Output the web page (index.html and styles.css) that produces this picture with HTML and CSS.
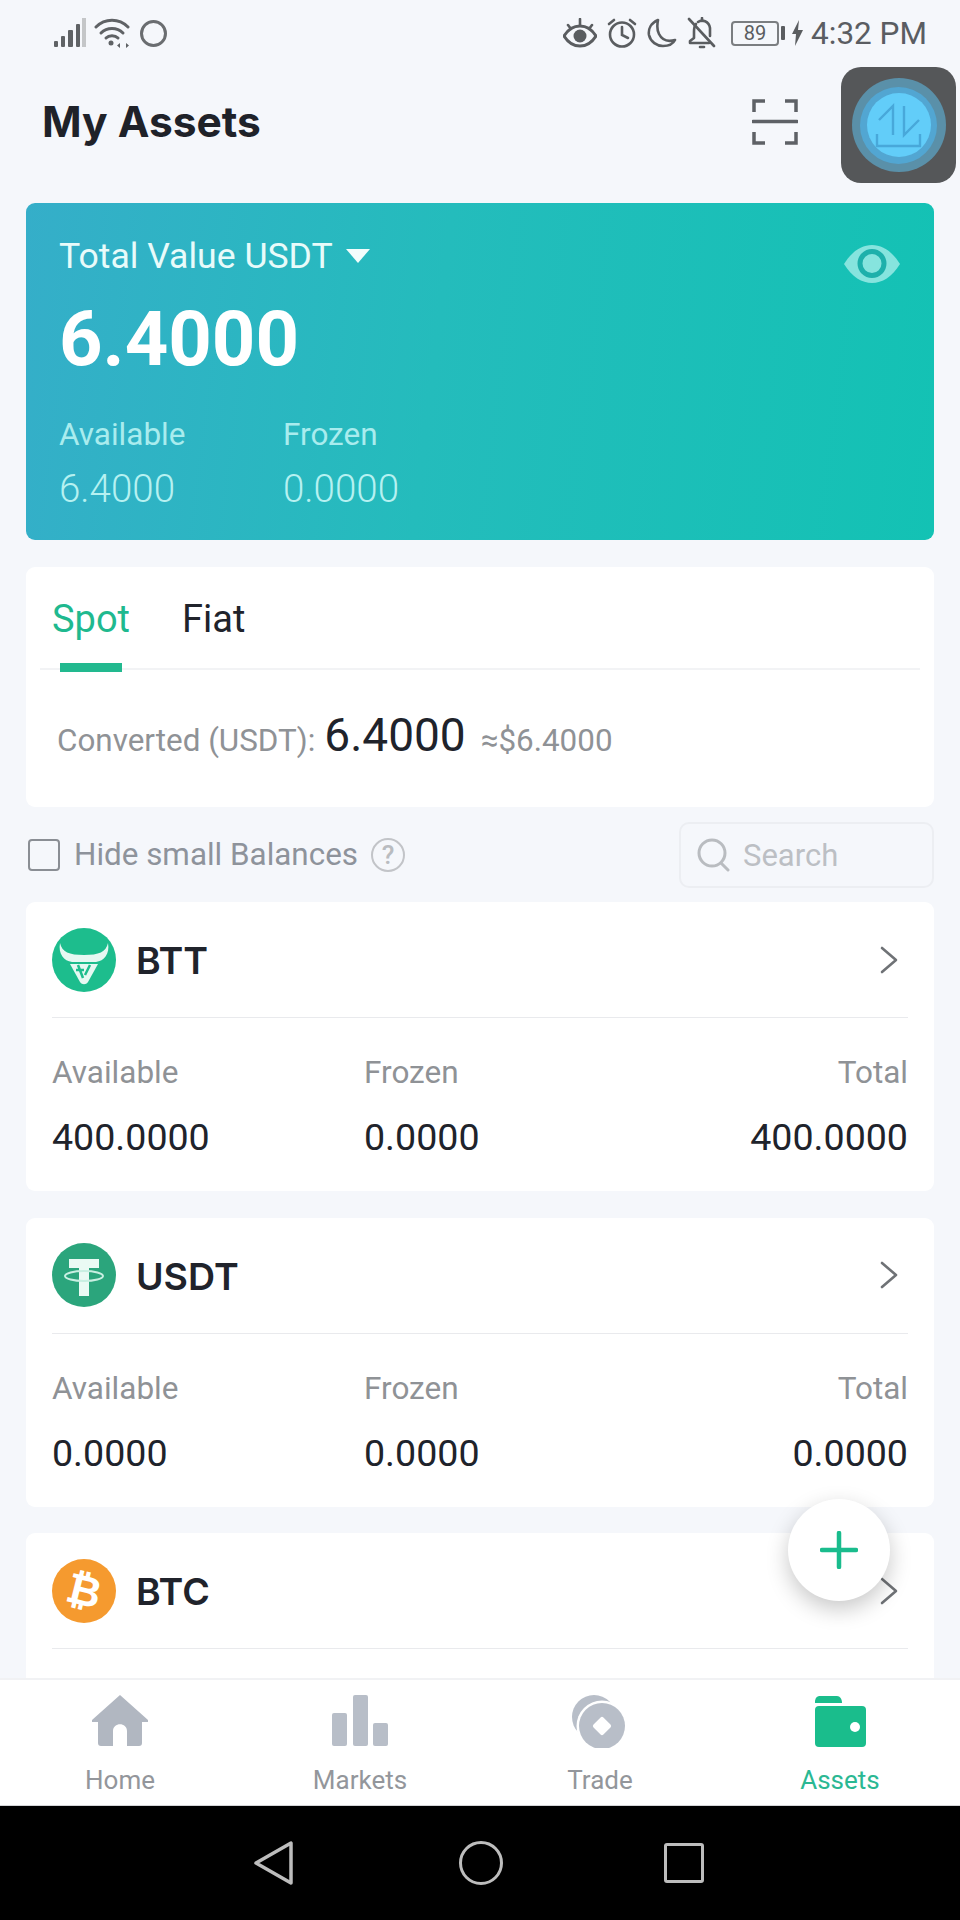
FILE: index.html
```html
<!DOCTYPE html>
<html>
<head>
<meta charset="utf-8">
<title>My Assets</title>
<link rel="stylesheet" href="styles.css">
</head>
<body>
<div class="phone">
  <div class="status">
    <div class="status-left">
      <svg width="34" height="30" viewBox="0 0 34 30"><rect x="1" y="23" width="4" height="6" rx="1" fill="#5f6265"/><rect x="8" y="18" width="4" height="11" rx="1" fill="#5f6265"/><rect x="15" y="12" width="5" height="17" rx="1" fill="#5f6265"/><rect x="23" y="6" width="4" height="23" rx="1" fill="#5f6265"/><rect x="29" y="0" width="4" height="29" fill="#c4c6c8"/></svg>
      <svg width="36" height="32" viewBox="0 0 36 32" fill="none" stroke="#5f6265" stroke-width="3" stroke-linecap="round"><path d="M2 10C11 1 25 1 34 10"/><path d="M7 16C13 10 23 10 29 16"/><path d="M12 21C15 18 21 18 24 21"/><circle cx="17" cy="26" r="2.5" fill="#5f6265" stroke="none"/><path d="M26 26l-3 2.5 3 2.5zM30 25v6M32 26l3 2.5-3 2.5z" fill="#5f6265" stroke="none"/></svg>
      <span class="dot-ring"></span>
    </div>
    <div class="status-right">
      <svg class="st-eye" width="34" height="30" viewBox="0 0 34 30"><path d="M1 18C6 10 12 8 17 8s11 2 16 10c-5 8-11 10-16 10S6 26 1 18z" fill="none" stroke="#5a5d60" stroke-width="3"/><circle cx="17" cy="18" r="6.5" fill="#5a5d60"/><path d="M5 7l3 4M17 1v6M29 7l-3 4" stroke="#5a5d60" stroke-width="2.6" stroke-linecap="round"/></svg>
      <svg class="st-alarm" width="30" height="30" viewBox="0 0 30 30" fill="none" stroke="#5a5d60" stroke-width="2.6" stroke-linecap="round"><circle cx="15" cy="16.5" r="12"/><path d="M15 9v8l6 3M2 6l5-4M28 6l-5-4"/></svg>
      <svg class="st-moon" width="30" height="30" viewBox="0 0 30 30"><path d="M11 2C4 5 1 11 2 17c1.5 7 8 11 14 11 5 0 10-2 12-6-7 2-13 0-16-6-2-4-2-9-1-14z" fill="none" stroke="#5a5d60" stroke-width="2.6" stroke-linejoin="round"/></svg>
      <svg class="st-bell" width="30" height="32" viewBox="0 0 30 32" fill="none" stroke="#5a5d60" stroke-width="2.6" stroke-linecap="round" stroke-linejoin="round"><path d="M9 7C7 9 7 12 7 15v6l-4 3v2h19"/><path d="M11 5c4-3 11-1 12 6v8"/><path d="M15 1v3M2 2l25 27"/><path d="M13 30h4"/></svg>
      <div class="battery"><span class="battery-num">89</span></div>
      <span class="battery-nub"></span>
      <svg class="st-bolt" width="11" height="26" viewBox="0 0 11 26"><path d="M7 0L0 14h4l-1 12 8-16H6z" fill="#5a5d60"/></svg>
      <span class="clock">4:32 PM</span>
    </div>
  </div>

  <div class="header">
    <h1 class="title">My Assets</h1>
    <svg class="scan" width="46" height="46" viewBox="0 0 46 46" fill="none" stroke="#5e6166" stroke-width="3.5"><path d="M13 2H2v11M33 2h11v11M2 33v11h11M44 33v11H33"/><path d="M1 22.5h44" stroke-linecap="round"/></svg>
  </div>

  <div class="content">
    <div class="hero">
      <div class="hero-top">
        <span class="hero-title">Total Value USDT</span>
        <span class="caret"></span>
        <svg class="hero-eye" width="56" height="38" viewBox="0 0 56 38"><path d="M0 19C8 6 18 0 28 0s20 6 28 19c-8 13-18 19-28 19S8 32 0 19z" fill="#86e4de"/><circle cx="28" cy="18.5" r="12" fill="none" stroke="#1eb0ab" stroke-width="5"/></svg>
      </div>
      <div class="hero-amount">6.4000</div>
      <div class="hero-cols">
        <div class="hero-col">
          <span class="hero-label">Available</span>
          <span class="hero-value">6.4000</span>
        </div>
        <div class="hero-col">
          <span class="hero-label">Frozen</span>
          <span class="hero-value">0.0000</span>
        </div>
      </div>
    </div>

    <div class="panel">
      <div class="tabs">
        <span class="tab tab-on">Spot</span>
        <span class="tab">Fiat</span>
      </div>
      <div class="converted">
        <span class="conv-label">Converted (USDT):</span>
        <span class="conv-value">6.4000</span>
        <span class="conv-usd">≈$6.4000</span>
      </div>
    </div>

    <div class="filter">
      <span class="checkbox"></span>
      <span class="filter-text">Hide small Balances</span>
      <span class="help">?</span>
      <div class="search">
        <svg width="34" height="34" viewBox="0 0 34 34" fill="none" stroke="#b9bcc0" stroke-width="3" stroke-linecap="round"><circle cx="15" cy="15" r="13"/><path d="M24 25l7 7"/></svg>
        <span class="search-text">Search</span>
      </div>
    </div>

    <div class="coin">
      <div class="coin-head">
        <svg width="64" height="64" viewBox="0 0 64 64"><circle cx="32" cy="32" r="32" fill="#1dbd8d"/><path d="M8 15c2 9 9 12 24 12s22-3 24-12c2 11-4 18-12 19H20C12 33 6 26 8 15z" fill="#e6f8f2"/><path d="M18 36h28L36 54c-2 3-6 3-8 0z" fill="#e6f8f2"/><path d="M26 37l5 13M38 37l-5 10M24 42h8" fill="none" stroke="#1dbd8d" stroke-width="2.5"/></svg>
        <span class="coin-name">BTT</span>
        <svg class="chevron" width="18" height="28" viewBox="0 0 18 28" fill="none" stroke="#6f7276" stroke-width="2.6" stroke-linecap="round" stroke-linejoin="round"><path d="M2 2l14 12L2 26"/></svg>
      </div>
      <div class="coin-cols">
        <span class="coin-label">Available</span><span class="coin-label">Frozen</span><span class="coin-label coin-end">Total</span>
        <span class="coin-value">400.0000</span><span class="coin-value">0.0000</span><span class="coin-value coin-end">400.0000</span>
      </div>
    </div>

    <div class="coin">
      <div class="coin-head">
        <svg width="64" height="64" viewBox="0 0 64 64"><circle cx="32" cy="32" r="32" fill="#2ba57c"/><path d="M17 16h30v9H37v28h-10V25H17z" fill="#eafaf4"/><ellipse cx="32" cy="33" rx="19" ry="5" fill="none" stroke="#c9efe2" stroke-width="2"/></svg>
        <span class="coin-name">USDT</span>
        <svg class="chevron" width="18" height="28" viewBox="0 0 18 28" fill="none" stroke="#6f7276" stroke-width="2.6" stroke-linecap="round" stroke-linejoin="round"><path d="M2 2l14 12L2 26"/></svg>
      </div>
      <div class="coin-cols">
        <span class="coin-label">Available</span><span class="coin-label">Frozen</span><span class="coin-label coin-end">Total</span>
        <span class="coin-value">0.0000</span><span class="coin-value">0.0000</span><span class="coin-value coin-end">0.0000</span>
      </div>
    </div>

    <div class="coin">
      <div class="coin-head">
        <div class="btc-logo"><span class="btc-mark">₿</span></div>
        <span class="coin-name">BTC</span>
        <svg class="chevron" width="18" height="28" viewBox="0 0 18 28" fill="none" stroke="#6f7276" stroke-width="2.6" stroke-linecap="round" stroke-linejoin="round"><path d="M2 2l14 12L2 26"/></svg>
      </div>
    </div>
  </div>

  <div class="nav">
    <div class="nav-item">
      <svg width="58" height="54" viewBox="0 0 58 54"><path d="M29 1L1 26v2h6v21c0 2 1 3 3 3h12V37c0-9 14-9 14 0v15h12c2 0 3-1 3-3V28h6v-2z" fill="#b1b7c1"/></svg>
      <span class="nav-text">Home</span>
    </div>
    <div class="nav-item">
      <svg width="58" height="54" viewBox="0 0 58 54"><rect x="1" y="19" width="15" height="33" rx="2" fill="#b8bec8"/><rect x="22" y="1" width="15" height="51" rx="2" fill="#b8bec8"/><rect x="42" y="29" width="15" height="23" rx="2" fill="#b8bec8"/></svg>
      <span class="nav-text">Markets</span>
    </div>
    <div class="nav-item">
      <svg width="58" height="54" viewBox="0 0 58 54"><circle cx="23" cy="23" r="22" fill="#b8bec8"/><circle cx="31" cy="32" r="25.5" fill="#fff"/><circle cx="31" cy="32" r="23" fill="#b8bec8"/><rect x="24" y="25" width="14" height="14" rx="2" fill="#fff" transform="rotate(45 31 32)"/></svg>
      <span class="nav-text">Trade</span>
    </div>
    <div class="nav-item nav-on">
      <svg width="58" height="54" viewBox="0 0 58 54"><path d="M4 8c0-4 2-6 5-6h17c3 0 5 3 5 7H4z" fill="#1abd8c"/><rect x="4" y="12" width="51" height="41" rx="4" fill="#1abd8c"/><circle cx="44" cy="33" r="5" fill="#fff"/></svg>
      <span class="nav-text">Assets</span>
    </div>
  </div>

  <div class="softkeys">
    <svg width="40" height="46" viewBox="0 0 40 46" fill="none" stroke="#bdbdbd" stroke-width="3.5" stroke-linejoin="round"><path d="M37 3v40L2 23z"/></svg>
    <span class="key-circle"></span>
    <span class="key-square"></span>
  </div>

  <div class="fab">
    <svg width="38" height="38" viewBox="0 0 38 38" stroke="#1abc8d" stroke-width="4.5" stroke-linecap="round"><path d="M19 2v34M2 19h34"/></svg>
  </div>

  <div class="float-btn">
    <div class="float-outer">
      <div class="float-mid">
        <div class="float-inner">
          <svg width="47" height="45" viewBox="0 0 47 45" fill="none" stroke="#48a8da" stroke-width="2.4"><path d="M4 17L18 3v29M29 3v29l15-15"/><path d="M2 31v12h43V31"/></svg>
        </div>
      </div>
    </div>
  </div>
</div>
</body>
</html>
```

FILE: styles.css
```css
html,body{ margin:0; padding:0;}
body{ background:#f5f7fb; font-family:Roboto,"Liberation Sans",sans-serif;}
.phone{ position:relative; display:flex; flex-direction:column; width:960px; height:1920px; overflow:hidden; background:#f5f7fb;}

/* status bar */
.status{ display:flex; justify-content:space-between; align-items:center; flex:none; height:66px; padding:0 33px 0 53px;}
.status-left{ display:flex; align-items:center; gap:7px;}
.dot-ring{ width:21px; height:21px; margin-left:3px; border:3px solid #6a6d70; border-radius:50%;}
.status-right{ display:flex; align-items:center;}
.st-alarm{ margin-left:10px;}
.st-moon{ margin-left:10px;}
.st-bell{ margin-left:10px;}
.battery{ display:flex; justify-content:center; align-items:center; box-sizing:border-box; width:48px; height:25px; margin-left:14px; border:2px solid #7b7e81; border-radius:4px;}
.battery-num{ font-size:20px; line-height:20px; color:#5a5d60;}
.battery-nub{ width:4px; height:14px; margin-left:2px; background:#5a5d60; border-radius:1px;}
.st-bolt{ margin-left:7px;}
.clock{ margin-left:8px; font-size:31.5px; color:#5a5d62;}

/* header */
.header{ display:flex; justify-content:space-between; align-items:center; flex:none; height:137px; padding:0 162px 26px 42px; box-sizing:border-box;}
.title{ margin:0; font-family:Inter,"Liberation Sans",sans-serif; font-size:42.5px; font-weight:700; color:#1f2229;}

/* content */
.content{ flex:1; overflow:hidden; padding:0 26px; min-height:0;}
.hero{ box-sizing:border-box; height:337px; padding:32px 34px 0 33px; border-radius:9px; background:linear-gradient(97deg,#35aec9 0%,#24bcbc 45%,#13c2b4 100%); color:#e8fbfa;}
.hero-top{ display:flex; align-items:center; height:42px;}
.hero-title{ font-size:35.6px; line-height:42px;}
.caret{ width:0; height:0; margin-left:13px; border-left:12px solid transparent; border-right:12px solid transparent; border-top:14px solid #f2fdfc;}
.hero-eye{ margin:16px 0 0 auto;}
.hero-amount{ margin-top:18px; font-size:76px; line-height:88px; font-weight:700; color:#fff;}
.hero-cols{ display:flex; margin-top:34px;}
.hero-col{ display:flex; flex-direction:column; width:224px;}
.hero-label{ font-size:31.5px; line-height:36px; color:#a9ecee;}
.hero-value{ margin-top:14px; font-size:38.5px; line-height:44px; font-weight:300; color:#b6f1f1;}

.panel{ box-sizing:border-box; height:240px; margin-top:27px; padding:0 14px; border-radius:9px; background:#fff;}
.tabs{ display:flex; gap:52px; height:103px; padding:0 18px 0 12px; box-sizing:border-box; border-bottom:2px solid #f2f3f5; margin:0;}
.tab{ position:relative; box-sizing:border-box; height:103px; padding-top:29px; font-size:38px; line-height:46px; color:#20232b;}
.tab-on{ color:#1fb98f;}
.tab-on:after{ content:""; position:absolute; left:8px; right:8px; bottom:-2px; height:9px; background:#22b98f;}
.converted{ display:flex; align-items:baseline; padding:38px 0 0 17px;}
.conv-label{ font-size:31.4px; color:#8f9296;}
.conv-value{ margin-left:9px; font-size:46px; color:#20232b;}
.conv-usd{ margin-left:15px; font-size:31.4px; color:#8f9296;}

.filter{ display:flex; align-items:center; height:95px; margin-left:2px;}
.checkbox{ box-sizing:border-box; width:32px; height:32px; border:2px solid #8a8e94; border-radius:4px;}
.filter-text{ margin-left:14px; font-size:31.4px; color:#8e939b;}
.help{ display:flex; justify-content:center; align-items:center; box-sizing:border-box; width:34px; height:34px; margin-left:13px; border:2.5px solid #c2c4c8; border-radius:50%; font-size:26px; font-weight:500; color:#b9bcc0;}
.search{ display:flex; align-items:center; gap:12px; box-sizing:border-box; width:255px; height:66px; margin-left:auto; padding-left:16px; border:2px solid #eceef2; border-radius:10px;}
.search-text{ padding-top:2px; font-size:31px; color:#bcbfc4;}

.coin{ box-sizing:border-box; height:289px; margin-bottom:26.5px; padding:0 26px; border-radius:9px; background:#fff;}
.coin-head{ display:flex; align-items:center; height:116px; border-bottom:1px solid #e9eaed; box-sizing:border-box;}
.coin-name{ margin-left:20px; padding-top:2px; font-family:Inter,"Liberation Sans",sans-serif; font-size:37.5px; font-weight:600; color:#20232b;}
.chevron{ margin:0 10px 0 auto;}
.coin-cols{ display:grid; grid-template-columns:312px 1fr auto; row-gap:24px; padding-top:37px;}
.coin-label{ font-size:31.5px; line-height:36px; color:#8f9296;}
.coin-value{ font-size:37.6px; line-height:44px; color:#20232b;}
.coin-end{ text-align:right;}
.btc-logo{ display:flex; justify-content:center; align-items:center; width:64px; height:64px; border-radius:50%; background:#f59a2f;}
.btc-mark{ font-family:"DejaVu Sans",sans-serif; font-size:42px; font-weight:700; line-height:42px; color:#fff; transform:rotate(14deg);}

/* bottom nav */
.nav{ display:grid; grid-template-columns:repeat(4,240px); flex:none; box-sizing:border-box; height:128px; padding-top:14px; background:#fff; border-top:2px solid #f1f2f4; border-bottom:1px solid #d4d5d7;}
.nav-item{ display:flex; flex-direction:column; align-items:center;}
.nav-text{ margin-top:17px; font-size:26px; line-height:30px; color:#93969b;}
.nav-on .nav-text{ color:#2bb893;}

/* android keys */
.softkeys{ display:flex; justify-content:center; align-items:center; gap:161px; flex:none; height:114px; margin-left:-2px; background:#000; padding-bottom:1px; box-sizing:border-box;}
.key-circle{ box-sizing:border-box; width:44px; height:44px; border:3.5px solid #bdbdbd; border-radius:50%; margin-left:4px;}
.key-square{ box-sizing:border-box; width:40px; height:40px; border:3.5px solid #bdbdbd; border-radius:3px;}

/* floating things */
.fab{ position:absolute; left:788px; top:1499px; display:flex; justify-content:center; align-items:center; width:102px; height:102px; border-radius:50%; background:#fff; box-shadow:0 8px 22px rgba(0,0,0,.22);}
.float-btn{ position:absolute; left:841px; top:67px; display:flex; justify-content:center; align-items:center; width:115px; height:116px; border-radius:20px; background:#555759;}
.float-outer{ display:flex; justify-content:center; align-items:center; width:94px; height:94px; border-radius:50%; background:#5a90a9;}
.float-mid{ display:flex; justify-content:center; align-items:center; width:77px; height:77px; border-radius:50%; background:#52a6d2;}
.float-inner{ display:flex; justify-content:center; align-items:center; width:64px; height:64px; border-radius:50%; background:#62cdf9;}
```
